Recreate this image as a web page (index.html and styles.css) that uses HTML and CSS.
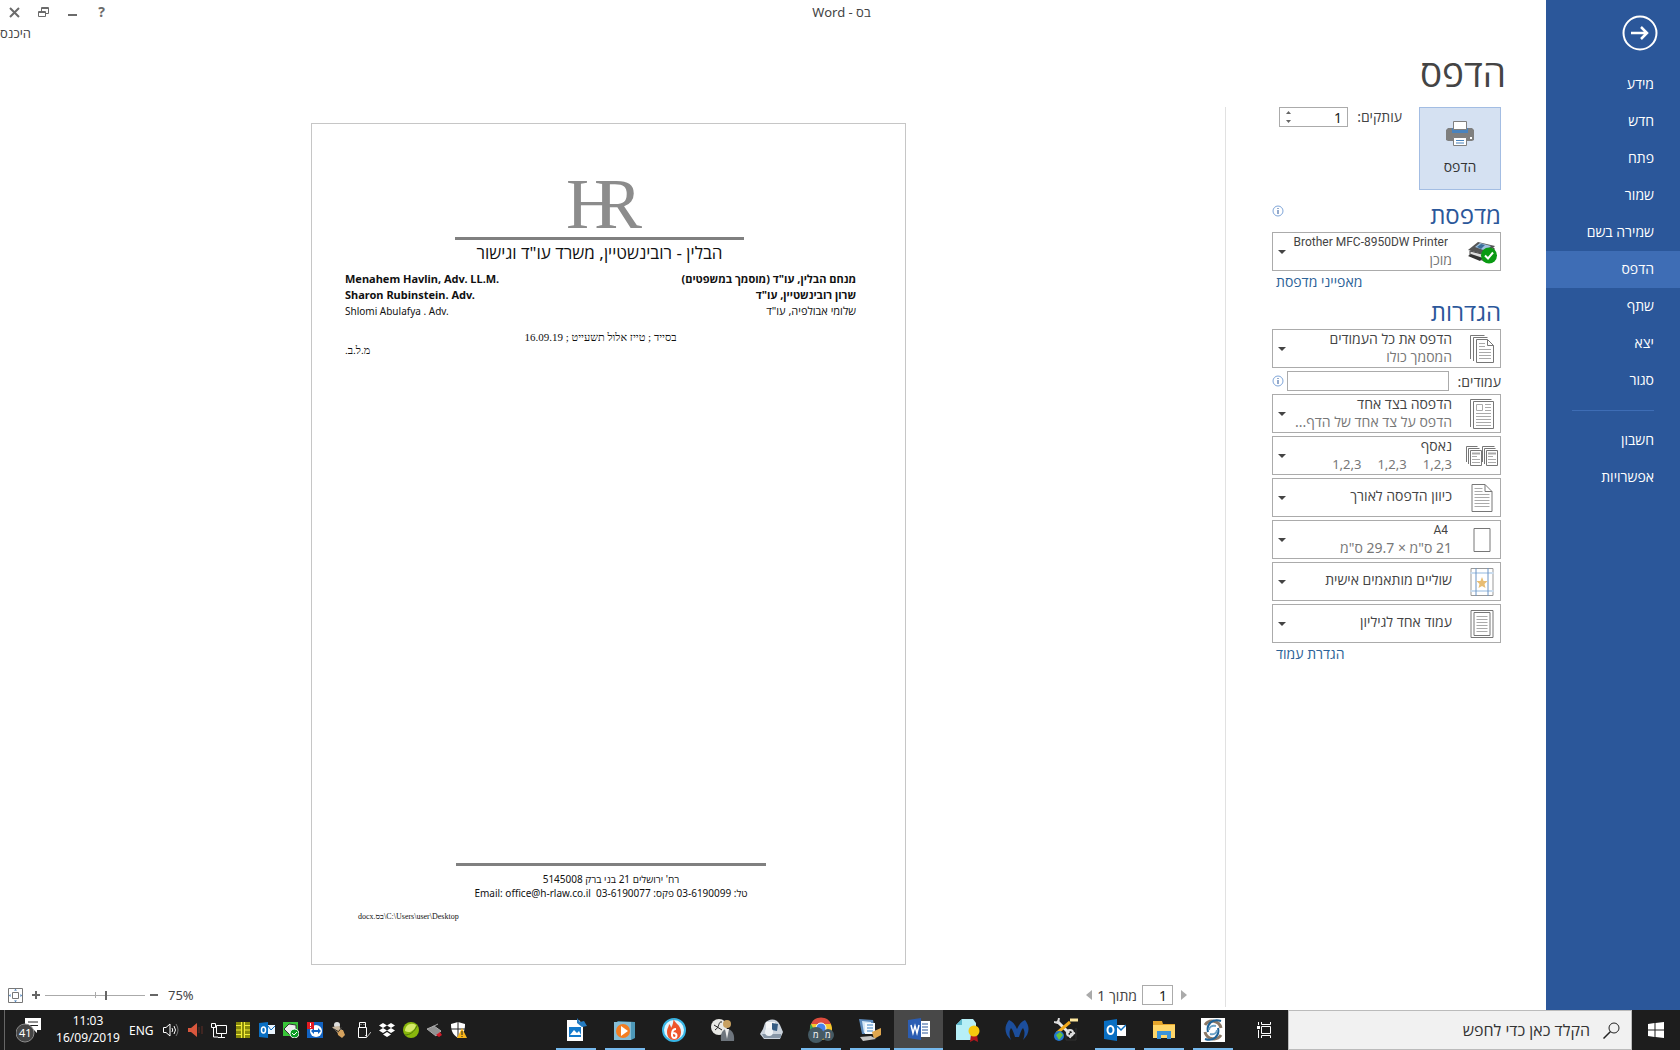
FILE: index.html
```html
<!DOCTYPE html>
<html lang="he" dir="rtl">
<head>
    <meta charset="UTF-8">
    <meta name="viewport" content="width=device-width, initial-scale=1.0">
    <title>בס - Word</title>
    <link rel="stylesheet" href="styles.css">
</head>
<body>
    <div class="app">
        <nav class="sidebar">
            <button class="back" aria-label="חזרה">
                <svg width="36" height="36" viewBox="0 0 36 36" fill="none" stroke="#fff" stroke-width="2"><circle cx="18" cy="18" r="16.5"/><path d="M9 18h16M19 12l6 6-6 6" stroke-width="2.500"/></svg>
            </button>
            <a href="#">מידע</a>
            <a href="#">חדש</a>
            <a href="#">פתח</a>
            <a href="#">שמור</a>
            <a href="#">שמירה בשם</a>
            <a href="#" class="active">הדפס</a>
            <a href="#">שתף</a>
            <a href="#">יצא</a>
            <a href="#">סגור</a>
            <hr>
            <a href="#">חשבון</a>
            <a href="#">אפשרויות</a>
        </nav>

        <main class="main">
            <header class="titlebar">
                <span class="window-title">בס - Word</span>
                <div class="window-buttons">
                    <button aria-label="סגור"><svg width="11" height="11" viewBox="0 0 11 11" stroke="#6b6b6b" stroke-width="2"><path d="M1 1l9 9M10 1l-9 9"/></svg></button>
                    <button aria-label="שחזר"><svg width="11" height="11" viewBox="0 0 11 11" fill="none" stroke="#6b6b6b"><path d="M.5 4.500h7v5h-7zM.5 5.500h7M3.500 4V.5h7v6H8M3.500 1.500h7"/></svg></button>
                    <button aria-label="מזער"><svg width="11" height="11" viewBox="0 0 11 11"><path d="M1 7h9v2H1z" fill="#6b6b6b"/></svg></button>
                    <button aria-label="עזרה">?</button>
                </div>
            </header>
            <a href="#" class="signin">היכנס</a>
            <h1>הדפס</h1>

            <div class="work">
                <section class="panel">
                    <div class="print-row">
                        <button class="print-button">
                            <svg width="28" height="26" viewBox="0 0 28 26"><path d="M2 7h24l2 2v10l-2 1H2l-2-1V9z" fill="#7f7f7f"/><path d="M6 7h16v5H6z" fill="#4a83bd"/><path d="M7.500.5h13v8h-13z" fill="#fff" stroke="#7f7f7f"/><path d="M7.500 16.500h13v8h-13z" fill="#fff" stroke="#7f7f7f"/><path d="M10 19.500h8M10 22h8" stroke="#4a83bd"/><path d="M24 16h2v2h-2z" fill="#fff"/></svg>
                            <span>הדפס</span>
                        </button>
                        <label for="copies">עותקים:</label>
                        <div class="spinner">
                            <input type="text" id="copies" value="1">
                            <div class="spin-buttons">
                                <button aria-label="יותר"><svg width="5" height="3"><path d="M0 3L2.500 0 5 3z" fill="#666"/></svg></button>
                                <button aria-label="פחות"><svg width="5" height="3"><path d="M0 0L2.500 3 5 0z" fill="#666"/></svg></button>
                            </div>
                        </div>
                    </div>

                    <div class="section-head">
                        <h2>מדפסת</h2>
                        <svg class="info" width="12" height="12" viewBox="0 0 12 12"><circle cx="6" cy="6" r="5" fill="none" stroke="#7fa6d9"/><path d="M5.500 3h1v1h-1zM5.500 5h1v4h-1z" fill="#2b579a"/></svg>
                    </div>
                    <div class="combo">
                        <svg class="combo-icon" width="30" height="24" viewBox="0 0 30 24"><path d="M1 10l10-8 17 4-9 9z" fill="#555"/><path d="M8 7l5-4 11 3-5 5z" fill="#9fc0dd"/><path d="M10 7l4-3 4 1-4 4z" fill="#3b6d99"/><path d="M3 11l16 4 8-7v6l-9 7-15-5z" fill="#ddd" stroke="#444"/><path d="M1 16l3-2 12 4-3 3z" fill="#333"/><circle cx="22" cy="15.500" r="8" fill="#0a9a13"/><path d="M18 15.500l3 3 5-6" fill="none" stroke="#fff" stroke-width="2"/></svg>
                        <div class="combo-text">
                            <select class="latin" aria-label="מדפסת"><option>Brother MFC-8950DW Printer</option></select>
                            <span>מוכן</span>
                        </div>
                        <i class="arrow"></i>
                    </div>
                    <a href="#" class="panel-link">מאפייני מדפסת</a>

                    <div class="section-head second">
                        <h2>הגדרות</h2>
                    </div>
                    <div class="combo">
                        <svg class="combo-icon" width="24" height="28" viewBox="0 0 24 28" fill="none" stroke="#777"><path d="M.5 24V.5h14M3.500 26V2.500h14M6.500 4.500h11l6 6v17h-17zM17.500 4.500v6h6"/><path d="M9 8.500h6M9 11.500h6M9 14.500h12M9 17.500h12M9 20.500h12M9 23.500h12" stroke="#aaa"/></svg>
                        <div class="combo-text">
                            <select aria-label="עמודים להדפסה"><option>הדפס את כל העמודים</option></select>
                            <span>המסמך כולו</span>
                        </div>
                        <i class="arrow"></i>
                    </div>
                    <div class="pages-row">
                        <label for="pages">עמודים:</label>
                        <input type="text" id="pages">
                        <svg class="info" width="12" height="12" viewBox="0 0 12 12"><circle cx="6" cy="6" r="5" fill="none" stroke="#7fa6d9"/><path d="M5.500 3h1v1h-1zM5.500 5h1v4h-1z" fill="#2b579a"/></svg>
                    </div>
                    <div class="combo">
                        <svg class="combo-icon" width="24" height="30" viewBox="0 0 24 30" fill="none" stroke="#777"><path d="M.5 28V.5h21M3.500 2.500h20v27h-20z"/><path d="M6.500 5.500h6v6h-6zM15 5.500h6M15 8.500h6M15 11.500h6M6 14.500h15M6 17.500h15M6 20.500h15M6 23.500h15M6 26.500h15" stroke="#aaa"/></svg>
                        <div class="combo-text">
                            <select aria-label="צדדים"><option>הדפסה בצד אחד</option></select>
                            <span>הדפס על צד אחד של הדף...</span>
                        </div>
                        <i class="arrow"></i>
                    </div>
                    <div class="combo">
                        <svg class="combo-icon" width="32" height="20" viewBox="0 0 32 20" fill="none" stroke="#777"><path d="M.5 16V.5h11M2.500 18V2.500h11M4.500 4.500h11v15h-11zM16.500 16V.5h12M18.500 18V2.500h11M20.500 4.500h11v15h-11z"/><path d="M6 7.500h8M22 7.500h8" stroke="#aaa" stroke-width="2"/><path d="M6 10.500h5M6 13.500h8M6 16.500h8M22 10.500h5M22 13.500h8M22 16.500h8" stroke="#aaa"/></svg>
                        <div class="combo-text">
                            <select aria-label="איסוף"><option>נאסף</option></select>
                            <span class="sets"><b>1,2,3</b><b>1,2,3</b><b>1,2,3</b></span>
                        </div>
                        <i class="arrow"></i>
                    </div>
                    <div class="combo">
                        <svg class="combo-icon" width="21" height="28" viewBox="0 0 21 28" fill="none" stroke="#777"><path d="M.5.5h13l7 7v20H.5zM13.500.5v7h7"/><path d="M3 4.500h8M3 7.500h8M3 10.500h15M3 13.500h15M3 16.500h15M3 19.500h15M3 22.500h15" stroke="#aaa"/></svg>
                        <div class="combo-text">
                            <select aria-label="כיוון"><option>כיוון הדפסה לאורך</option></select>
                        </div>
                        <i class="arrow"></i>
                    </div>
                    <div class="combo">
                        <svg class="combo-icon" width="17" height="24" viewBox="0 0 17 24"><path d="M.5.5h16v23H.5z" fill="none" stroke="#777"/></svg>
                        <div class="combo-text">
                            <select class="latin" aria-label="גודל נייר"><option>A4</option></select>
                            <span>21 ס"מ × 29.7 ס"מ</span>
                        </div>
                        <i class="arrow"></i>
                    </div>
                    <div class="combo">
                        <svg class="combo-icon" width="23" height="28" viewBox="0 0 23 28" fill="none"><path d="M.5.5h22v27H.5z" stroke="#999"/><path d="M0 5h23M0 23h23" stroke="#c9dcef" stroke-width="2"/><path d="M5.500 0v28M17.500 0v28" stroke="#6a93c4"/><path d="M11.500 9l1.500 4h4l-3 3 1 4-3.500-2L8 20l1-4-3-3h4z" fill="#e8bd74"/></svg>
                        <div class="combo-text">
                            <select aria-label="שוליים"><option>שוליים מותאמים אישית</option></select>
                        </div>
                        <i class="arrow"></i>
                    </div>
                    <div class="combo">
                        <svg class="combo-icon" width="23" height="28" viewBox="0 0 23 28" fill="none" stroke="#777"><path d="M.5.5h22v27H.5zM3.500 2.500h16v23h-16z"/><path d="M6 6.500h11M6 9.500h11M6 12.500h11M6 15.500h11M6 18.500h11M6 21.500h11" stroke="#aaa"/></svg>
                        <div class="combo-text">
                            <select aria-label="עמודים לגיליון"><option>עמוד אחד לגיליון</option></select>
                        </div>
                        <i class="arrow"></i>
                    </div>
                    <a href="#" class="panel-link">הגדרת עמוד</a>
                </section>

                <section class="preview">
                    <div class="paper-area">
                        <article class="paper">
                            <div class="letterhead">
                                <svg class="logo" width="84" height="52" viewBox="0 0 84 52"><text x="8" y="48">H</text><text x="36" y="48">R</text></svg>
                                <div class="rule"></div>
                                <h3>הבלין - רובינשטיין, משרד עו"ד וגישור</h3>
                            </div>
                            <div class="lawyers">
                                <ul>
                                    <li><b>מנחם הבלין, עו"ד (מוסמך במשפטים)</b></li>
                                    <li><b>שרון רובינשטיין, עו"ד</b></li>
                                    <li>שלומי אבולפיה, עו"ד</li>
                                </ul>
                                <ul class="latin-names" dir="ltr">
                                    <li><b>Menahem Havlin, Adv. LL.M.</b></li>
                                    <li><b>Sharon Rubinstein. Adv.</b></li>
                                    <li>Shlomi Abulafya . Adv.</li>
                                </ul>
                            </div>
                            <p class="date">בסייד ; טייז אלול תשעייט ; 16.09.19</p>
                            <p class="initials">מ.ל.ב.</p>
                            <footer class="paper-footer">
                                <div class="rule"></div>
                                <p>רח' ירושלים 21 בני ברק 5145008</p>
                                <p>טל: 03-6190099 פקס: 03-6190077&nbsp; <bdi>Email: office@h-rlaw.co.il</bdi></p>
                            </footer>
                            <p class="path">C:\Users\user\Desktop\בס.docx</p>
                        </article>
                    </div>
                    <div class="statusbar">
                        <div class="page-nav">
                            <button aria-label="הקודם"><svg width="6" height="10"><path d="M0 0l6 5-6 5z" fill="#aaa"/></svg></button>
                            <input type="text" value="1" aria-label="עמוד">
                            <span>מתוך 1</span>
                            <button aria-label="הבא"><svg width="6" height="10"><path d="M6 0L0 5l6 5z" fill="#aaa"/></svg></button>
                        </div>
                        <div class="zoom">
                            <span class="percent" dir="ltr">75%</span>
                            <button aria-label="הקטן"><svg width="8" height="8"><path d="M0 3h8v2H0z" fill="#666"/></svg></button>
                            <input type="range" min="0" max="100" value="39" aria-label="זום">
                            <button aria-label="הגדל"><svg width="8" height="8"><path d="M0 3h8v2H0zM3 0h2v8H3z" fill="#666"/></svg></button>
                            <button class="fit" aria-label="התאם לעמוד"><svg width="15" height="15" viewBox="0 0 15 15" fill="none" stroke="#777"><path d="M.5.5h14v14H.5zM4.500 4.500h6v6h-6z"/><path d="M6 2.500L7.500 1 9 2.500zM6 12.500L7.500 14 9 12.500zM2.500 6L1 7.500 2.500 9zM12.500 6L14 7.500 12.500 9z" fill="#2b6cb0" stroke="none"/></svg></button>
                        </div>
                    </div>
                </section>
            </div>
        </main>
    </div>

    <div class="taskbar">
        <button class="start" aria-label="התחל"><svg width="16" height="16" viewBox="0 0 16 16" fill="#fff"><path d="M0 2l6.500-1v6.500H0zM7.500 1L16 0v7.500H7.500zM0 8.500h6.500V15L0 14zM7.500 8.500H16V16l-8.500-1z"/></svg></button>
        <label class="search">
            <svg width="17" height="17" viewBox="0 0 17 17" fill="none" stroke="#222"><circle cx="11" cy="6" r="5"/><path d="M7.500 9.500L.5 16.500" stroke-width="1.500"/></svg>
            <input type="text" placeholder="הקלד כאן כדי לחפש">
        </label>
        <button class="task view" aria-label="תצוגת משימות"><svg width="16" height="16" viewBox="0 0 16 16" fill="none" stroke="#fff"><path d="M4.500 4.500h9v7h-9zM4.500 0v2.500h9V0M4.500 16v-2.500h9V16M1.500 0v3M1.500 8v8"/><path d="M0 4h3v3H0z" fill="#fff" stroke="none"/></svg></button>
        <button class="task open" aria-label="סריקה"><svg width="24" height="24" viewBox="0 0 24 24" fill="none"><path d="M0 0h24v24H0z" fill="#fff"/><path d="M4 7c4-6 14-5 16 3" stroke="#8b7967" stroke-width="3"/><path d="M20 17c-4 6-14 5-16-3" stroke="#8b7967" stroke-width="3"/><path d="M20 3C12 0 5 6 7 14" stroke="#1e6398" stroke-width="2"/><path d="M4 21c8 3 15-3 13-11" stroke="#1e6398" stroke-width="2"/><path d="M8 12c0-3 3-5 7-4M16 12c0 3-3 5-7 4" stroke="#6ca2c6" stroke-width="2"/></svg></button>
        <button class="task open" aria-label="סייר הקבצים"><svg width="22" height="18" viewBox="0 0 22 18"><path d="M0 0h9l1 3h12v14H0z" fill="#e5a52b"/><path d="M0 4h22v13H0z" fill="#ffd669"/><path d="M4 18v-8h14v8h-4v-4H8v4z" fill="#3b93d9"/></svg></button>
        <button class="task open" aria-label="Outlook"><svg width="22" height="22" viewBox="0 0 22 22"><path d="M0 2l13-2v22L0 20z" fill="#0a6fc2"/><path d="M13 6h9v11h-9z" fill="#fff"/><path d="M13 7l4 4 5-5" fill="none" stroke="#0a6fc2" stroke-width="1.500"/><ellipse cx="6.500" cy="11" rx="3" ry="4" fill="none" stroke="#fff" stroke-width="2"/></svg></button>
        <button class="task" aria-label="כלים"><svg width="24" height="24" viewBox="0 0 24 24" fill="none"><path d="M12 12v10h10V10" stroke="#333"/><path d="M3 3l12 12" stroke="#e9e9e9" stroke-width="3"/><path d="M0 4l4 1 1-5M21 15l-4 1-1 4" stroke="#ddd" stroke-width="2"/><circle cx="16" cy="15" r="3" stroke="#ddd" stroke-width="2"/><path d="M16 4L3 15" stroke="#f2a91c" stroke-width="3"/><path d="M16 2h8" stroke="#ffe9a0" stroke-width="3"/><circle cx="5" cy="18" r="5" fill="#2277d2"/><path d="M2 17l4-3 3 3-4 5z" fill="#67c33e"/></svg></button>
        <button class="task" aria-label="Malwarebytes"><svg width="24" height="22" viewBox="0 0 24 22"><path d="M4 1c3 1 6 4 8 9 2-5 5-8 8-9 5 6 5 14-2 20 2-5 2-9 0-12-2 2-3 6-4 9h-4C9 15 8 11 6 9c-2 3-2 7 0 12C-1 15-1 7 4 1z" fill="#1c4e9c"/></svg></button>
        <button class="task" aria-label="תעודה"><svg width="24" height="24" viewBox="0 0 24 24"><path d="M6 1h11l3 4v17H0V7z" fill="#b7eff7"/><path d="M0 7l6-6v6z" fill="#5eb9cd"/><path d="M15 16l-1 8 4-2 4 2-1-8z" fill="#b2171d"/><circle cx="18" cy="13" r="5.500" fill="#f7c90e"/></svg></button>
        <button class="task current" aria-label="Word"><svg width="22" height="22" viewBox="0 0 22 22"><path d="M12 3h10v16H12z" fill="#fff"/><path d="M14 6h6M14 9h6M14 12h6M14 15h6" stroke="#2b579a"/><path d="M0 2l13-2v22L0 20z" fill="#2b5db3"/><path d="M3 7l2 8 2-7 2 7 2-8" fill="none" stroke="#fff" stroke-width="1.500"/></svg></button>
        <button class="task open" aria-label="מסמכים"><svg width="24" height="24" viewBox="0 0 24 24"><path d="M1 1l14 1 3 14H4z" fill="#5b89bb"/><path d="M4 3l9 1 2 10-9 1z" fill="#d4e7f7"/><path d="M7 5h10v11H7z" fill="#f5faff"/><path d="M9 7h6M9 10h6M9 13h6" stroke="#3b81c4"/><path d="M14 14l9-4v7l-7 4z" fill="#dfa64e"/><path d="M2 19l11-1 5 3-13 2z" fill="#c5c5c5"/></svg></button>
        <button class="task open" aria-label="Chrome"><svg width="26" height="26" viewBox="0 0 26 26"><circle cx="13" cy="12" r="11" fill="#f7c62d"/><path d="M3 7a11 11 0 0 1 20 0z" fill="#dd4b3e"/><path d="M3 7l8 15C3 21 0 13 3 7z" fill="#36a455"/><circle cx="13" cy="11" r="5" fill="#4684ed" stroke="#fff"/><circle cx="8" cy="18" r="8" fill="#455a64"/><circle cx="20" cy="18" r="6" fill="#455a64"/><text class="badge-text" x="5" y="21">מ</text><text class="badge-text" x="17" y="21">מ</text></svg></button>
        <button class="task" aria-label="רובוט"><svg width="24" height="22" viewBox="0 0 24 22"><path d="M5 4c4-5 12-5 15 2l3 7-3 7H4l-4-5 3-5z" fill="#cbd3dc"/><path d="M6 3h9v7H6z" fill="#f5f6f7"/><path d="M12 4l6 1-1 7-5-1z" fill="#345b82"/><path d="M2 15h19v4H4z" fill="#8796a6"/><circle cx="9" cy="13" r="4" fill="#edf1f4"/></svg></button>
        <button class="task" aria-label="חתימה"><svg width="24" height="24" viewBox="0 0 24 24"><circle cx="8" cy="9" r="8" fill="#e9e9e5"/><path d="M4 12c5-3 3-9 7-8M3 7l8 5" stroke="#222" fill="none"/><circle cx="16" cy="6" r="4" fill="#c7a060"/><path d="M10 23c-1-8 2-12 6-12s8 4 7 12z" fill="#6e757d"/><path d="M14 11l2 10 2-10z" fill="#eee"/></svg></button>
        <button class="task" aria-label="צריבה"><svg width="24" height="24" viewBox="0 0 24 24"><circle cx="12" cy="12" r="11" fill="#dff5ff" stroke="#37b6e6" stroke-width="2"/><path d="M12 0c-1 5 7 6 7 14 0 5-3 8-7 8s-7-3-7-8c0-4 2-5 2-8 2 2 2 3 2 4 2-3 2-6 3-10z" fill="#ee552b"/><path d="M14 11c-5 0-5 9-2 9s4-5-1-5" fill="none" stroke="#fff" stroke-width="2"/></svg></button>
        <button class="task open" aria-label="נגן מדיה"><svg width="22" height="20" viewBox="0 0 22 20"><path d="M3 1l18 1v16l-4 2z" fill="#4d98b8"/><path d="M0 2h17v18H0z" fill="#86bdd5"/><circle cx="9" cy="11" r="7" fill="#f37d21"/><path d="M7 6l7 5-7 5z" fill="#fff"/></svg></button>
        <button class="task open" aria-label="תמונות"><svg width="22" height="24" viewBox="0 0 22 24"><path d="M2 2h12l4 5v16H2z" fill="#fff"/><path d="M4 9h12v10H4z" fill="#147acb"/><path d="M5 17l4-5 3 3 2-2 2 4z" fill="#fff"/><path d="M12 0l3 4 4-1 3 5-5 1-5-4z" fill="#247bc1"/></svg></button>

        <div class="tray">
            <svg width="16" height="16" viewBox="0 0 16 16"><path d="M7 0l7 2c0 6-1 10-7 14C1 12 0 8 0 2z" fill="#fff"/><path d="M7 0v15M0 7h14" stroke="#222"/><path d="M11 6l5 10H6z" fill="#f8b51b"/><path d="M11 9v4M11 14v1" stroke="#222"/></svg>
            <svg width="16" height="16" viewBox="0 0 16 16"><path d="M5 5l6-3M0 7l7-3 7 5-5 5z" fill="#929292" stroke="#aaa"/><path d="M9 13l4-3 2 3-3 2z" fill="#cf1b29"/></svg>
            <svg width="16" height="16" viewBox="0 0 16 16"><circle cx="8" cy="8" r="8" fill="#89b70c"/><path d="M2 9C2 3 8 0 13 3 12 8 7 12 2 9z" fill="#d4e96a"/><path d="M2 13c5 0 9-3 12-9" stroke="#4d7708" fill="none"/></svg>
            <svg width="16" height="16" viewBox="0 0 16 16" fill="#fff"><path d="M4 1l4 2.500L4 6 0 3.500zM12 1l4 2.500L12 6 8 3.500zM4 6l4 2.500L4 11 0 8.500zM12 6l4 2.500-4 2.500-4-2.500zM8 10l4 2.500L8 15l-4-2.500z"/></svg>
            <svg width="16" height="16" viewBox="0 0 16 16" fill="none" stroke="#fff"><path d="M4.500 5V.5h6V5M3.500 5.500h8v10h-8z"/><path d="M6 2v1M9 2v1M10 13l2 2 4-5" stroke="#bbb"/></svg>
            <svg width="16" height="16" viewBox="0 0 16 16"><circle cx="6" cy="3" r="3" fill="#ddd"/><path d="M1 5l7-1 5 7-3 3z" fill="#c9b69c"/><path d="M6 8l6 0 2 5-3 3-4-3z" fill="#d5a25e"/><path d="M3 7l5 3M11 5l-3 4" stroke="#333"/></svg>
            <svg width="16" height="16" viewBox="0 0 16 16"><path d="M0 0h16v16H0z" fill="#1263c2"/><circle cx="9" cy="9" r="6" fill="#fff"/><path d="M4 9l3-3v2h4V6l3 3-3 3v-2H7v2z" fill="#1263c2"/><path d="M0 0h7v7H0z" fill="#e31b23"/><path d="M3.500 1v3M3.500 5v1" stroke="#fff"/></svg>
            <svg width="16" height="16" viewBox="0 0 16 16"><path d="M0 0h15v14H0z" fill="#38c438"/><path d="M1 7l5-5 7 1v5l-6 5z" fill="#eee" stroke="#333"/><circle cx="11.500" cy="11.500" r="4.500" fill="#0b9c25" stroke="#fff"/><path d="M9 11l2 2 3-3" stroke="#fff" fill="none"/></svg>
            <svg width="16" height="16" viewBox="0 0 16 16"><path d="M0 1l9-1v16l-9-1z" fill="#0a6fc2"/><path d="M9 3h7v9H9z" fill="#eaf4fd"/><path d="M9 4l3 4 4-4" fill="none" stroke="#0a6fc2"/><ellipse cx="4.500" cy="8" rx="2" ry="3" fill="none" stroke="#fff" stroke-width="1.500"/></svg>
            <svg width="16" height="16" viewBox="0 0 16 16"><path d="M1 0h14v16H1z" fill="#8a8b0b"/><path d="M1 3.500h5M1 8h5M1 12.500h5M10 3.500h5M10 8h5M10 12.500h5M6.500 0v16M9.500 0v16" stroke="#f3ed38"/></svg>
            <svg width="16" height="16" viewBox="0 0 16 16" fill="none" stroke="#fff"><path d="M5.500 3.500h10v8h-10zM10.500 12v3M7 15.500h7M.5 1.500h4v4h-4zM2.500 6v9H7"/></svg>
            <svg width="16" height="16" viewBox="0 0 16 16"><path d="M1 6h3l6-5v14l-6-5H1z" fill="#d9573d"/><path d="M12 5v6M15 4v8" stroke="#642f27"/></svg>
            <svg width="16" height="16" viewBox="0 0 16 16" fill="none" stroke="#fff"><path d="M.5 5.500H3l4-3.500v12L3 10.500H.5zM9 6q1.500 2 0 4M11 4q3 4 0 8"/><path d="M13 2q4 6 0 12" stroke="#777"/></svg>
        </div>
        <span class="lang">ENG</span>
        <time class="clock"><span>11:03</span><span dir="ltr">16/09/2019</span></time>
        <button class="notifications" aria-label="התראות">
            <svg width="26" height="26" viewBox="0 0 26 26"><path d="M9 1h16v12h-4v3l-3-3H9z" fill="#fff"/><path d="M12 5h10M12 8.500h10" stroke="#222"/><circle cx="9" cy="16" r="9" fill="#454545" stroke="#8c8c8c"/><text class="badge-text count" x="3" y="20">41</text></svg>
        </button>
        <div class="peek"></div>
    </div>
</body>
</html>
```
FILE: styles.css
```css
* {
    box-sizing: border-box;
}

body {
    margin: 0;
    height: 100vh;
    display: flex;
    flex-direction: column;
    overflow: hidden;
    font-family: "Noto Sans", "Open Sans", "DejaVu Sans", sans-serif;
    font-size: 13px;
    color: #444;
    background-color: #fff;
}

button {
    padding: 0;
    border: none;
    background: none;
    font: inherit;
    color: inherit;
}

input,
select {
    font: inherit;
    color: inherit;
}

a {
    text-decoration: none;
}

h1,
h2,
h3,
p,
ul {
    margin: 0;
    padding: 0;
    font-weight: normal;
}

svg {
    display: block;
    flex: none;
}

.app {
    flex: 1;
    min-height: 0;
    display: flex;
}

/* Blue menu */
.sidebar {
    width: 134px;
    background-color: #2b579a;
    display: flex;
    flex-direction: column;
}

.sidebar .back {
    align-self: flex-start;
    margin: 15px 22px;
}

.sidebar a {
    height: 37px;
    line-height: 36px;
    padding: 0 26px;
    color: #fff;
    font-size: 14px;
}

.sidebar a.active {
    background-color: #3e6db5;
}

.sidebar hr {
    width: 82px;
    margin: 11px 26px;
    border: none;
    border-top: 1px solid #3e6db5;
}

/* Title bar */
.main {
    flex: 1;
    min-width: 0;
    display: flex;
    flex-direction: column;
}

.titlebar {
    height: 24px;
    display: flex;
    align-items: center;
}

.window-title {
    margin: 0 auto;
    padding-left: 30px;
}

.window-buttons {
    display: flex;
    flex-direction: row-reverse;
    gap: 18px;
    padding-left: 9px;
}

.window-buttons button {
    width: 11px;
    font-weight: bold;
    font-size: 14px;
    line-height: 14px;
    color: #6b6b6b;
}

.signin {
    align-self: flex-end;
    line-height: 18px;
    color: #444;
}

h1 {
    padding: 0 40px;
    height: 65px;
    line-height: 62px;
    font-size: 37px;
}

.work {
    flex: 1;
    min-height: 0;
    display: flex;
}

/* Print settings */
.panel {
    width: 321px;
    margin-bottom: 3px;
    padding: 0 45px 0 46px;
    border-left: 1px solid #e1e1e1;
    font-size: 14px;
}

.print-row {
    display: flex;
    align-items: flex-start;
}

.print-button {
    width: 82px;
    height: 83px;
    margin-left: 17px;
    display: flex;
    flex-direction: column;
    align-items: center;
    justify-content: center;
    gap: 10px;
    border: 1px solid #a3bde3;
    background-color: #d5e1f2;
    color: #333;
}

.print-row label {
    line-height: 20px;
    margin-left: 9px;
}

.spinner {
    width: 69px;
    height: 20px;
    display: flex;
    border: 1px solid #ababab;
}

.spinner input {
    flex: 1;
    min-width: 0;
    border: none;
    padding: 0 5px;
    color: #222;
}

.spin-buttons {
    width: 16px;
    display: flex;
    flex-direction: column;
    justify-content: space-around;
    align-items: center;
}

.section-head {
    display: flex;
    justify-content: space-between;
    margin-top: 8px;
    height: 34px;
}

.section-head.second {
    margin-top: 5px;
}

.section-head .info {
    margin-top: 7px;
}

h2 {
    font-size: 24px;
    line-height: 34px;
    color: #2b579a;
}

.combo {
    height: 39px;
    margin-bottom: 3px;
    display: flex;
    align-items: center;
    border: 1px solid #ababab;
}

.combo-icon {
    width: 36px;
    margin-left: 12px;
}

.combo-text {
    flex: 1;
    min-width: 0;
    padding-bottom: 1px;
    display: flex;
    flex-direction: column;
}

.combo-text select {
    appearance: none;
    border: none;
    background: none;
    padding: 0;
    height: 18px;
    line-height: 18px;
}

.combo-text select:only-child {
    margin-bottom: 3px;
}

.combo-text select.latin {
    padding-right: 4px;
    font-family: Roboto, sans-serif;
    font-size: 12px;
}

.combo-text span {
    line-height: 18px;
    white-space: nowrap;
    color: #777;
}

.combo-text .sets {
    display: flex;
    gap: 16px;
    font-size: 13px;
}

.sets b {
    font-weight: normal;
}

.arrow {
    margin: 0 5px;
    border: 4px solid transparent;
    border-top-color: #444;
    border-bottom: none;
}

.panel-link {
    display: block;
    padding-left: 4px;
    line-height: 16px;
    text-align: left;
    color: #2b6297;
}

.pages-row {
    height: 20px;
    margin-bottom: 3px;
    display: flex;
    align-items: center;
    justify-content: space-between;
}

.pages-row input {
    width: 162px;
    height: 20px;
    margin-right: auto;
    margin-left: 3px;
    border: 1px solid #ababab;
}

/* Preview */
.preview {
    flex: 1;
    min-width: 0;
    display: flex;
    flex-direction: column;
}

.paper-area {
    flex: 1;
    min-height: 0;
    padding: 16px 8px 0 0;
    display: flex;
    justify-content: center;
    align-items: flex-start;
}

.paper {
    width: 595px;
    aspect-ratio: 595 / 842;
    padding: 56px 33px 42px;
    display: flex;
    flex-direction: column;
    border: 1px solid #c6c6c6;
    font-size: 11px;
    color: #111;
}

.letterhead {
    width: 289px;
    margin-right: 128px;
    display: flex;
    flex-direction: column;
    align-items: center;
}

.logo {
    direction: ltr;
    font-family: "Liberation Serif", serif;
    font-size: 72px;
    fill: #8c8c8c;
    overflow: visible;
}

.rule {
    width: 100%;
    height: 3px;
    margin: 5px 0 3px;
    background-color: #808080;
}

h3 {
    font-size: 17px;
    line-height: 20px;
}

.lawyers {
    margin-top: 8px;
    padding: 0 16px 0 0;
    display: flex;
    justify-content: space-between;
}

.lawyers ul {
    list-style: none;
    line-height: 16px;
}

.latin-names li {
    font-size: 10px;
}

.lawyers b {
    font-size: 11px;
}

.date {
    margin-top: 11px;
    padding-right: 16px;
    text-align: center;
    line-height: 14px;
    font-family: "Liberation Serif", serif;
}

.initials {
    line-height: 12px;
    text-align: left;
    font-family: "Liberation Serif", serif;
}

.paper-footer {
    width: 310px;
    margin-top: auto;
    margin-right: 106px;
    text-align: center;
    line-height: 14px;
    font-size: 10px;
    white-space: nowrap;
}

.paper-footer .rule {
    margin-bottom: 6px;
}

.path {
    margin-top: 12px;
    padding-left: 13px;
    text-align: left;
    line-height: 10px;
    font-family: "Liberation Serif", serif;
    font-size: 8px;
}

.statusbar {
    height: 30px;
    padding: 0 38px 0 8px;
    display: flex;
    justify-content: space-between;
    align-items: center;
}

.page-nav,
.zoom {
    display: flex;
    align-items: center;
}

.page-nav {
    gap: 5px;
    font-size: 14px;
}

.page-nav input {
    width: 31px;
    height: 20px;
    margin-right: 3px;
    border: 1px solid #ababab;
    padding: 0 5px;
    color: #222;
}

.zoom {
    gap: 5px;
}

.zoom .percent {
    margin-left: 5px;
}

.zoom .fit {
    margin-right: 4px;
}

.zoom input {
    appearance: none;
    width: 100px;
    height: 12px;
    margin: 0;
    background: linear-gradient(#aaa, #aaa) center / 1px 6px no-repeat,
                linear-gradient(#aaa, #aaa) center / 100% 1px no-repeat;
}

.zoom input::-webkit-slider-thumb {
    appearance: none;
    width: 2px;
    height: 9px;
    background-color: #666;
}

/* Taskbar */
.taskbar {
    height: 40px;
    display: flex;
    align-items: center;
    background-color: #1d1d1d;
    color: #fff;
    font-size: 12px;
}

.start {
    width: 48px;
    height: 40px;
    display: flex;
    align-items: center;
    justify-content: center;
}

.search {
    width: 344px;
    height: 40px;
    padding: 0 11px;
    display: flex;
    align-items: center;
    gap: 11px;
    border: 1px solid #bbb;
    background-color: #f1f1f1;
}

.search input {
    flex: 1;
    min-width: 0;
    border: none;
    background: none;
    font-size: 16px;
}

.search input::placeholder {
    color: #333;
}

.task {
    width: 49px;
    height: 40px;
    padding: 0 4px;
    display: flex;
    align-items: center;
    justify-content: center;
}

.task.view {
    width: 51px;
    padding: 0 0 0 4px;
}

.task.open {
    background: linear-gradient(#76b9ed, #76b9ed) bottom / 40px 2px no-repeat;
}

.task.current {
    background-color: #484848;
    border-bottom: 2px solid #76b9ed;
}

.badge-text {
    direction: ltr;
    font-size: 9px;
    fill: #fff;
}

.badge-text.count {
    font-size: 11px;
}

.tray {
    margin-right: auto;
    display: flex;
    gap: 8px;
}

.lang {
    margin-right: 9px;
}

.clock {
    width: 82px;
    padding-bottom: 2px;
    margin-left: 5px;
    display: flex;
    flex-direction: column;
    align-items: center;
    line-height: 17px;
}

.notifications {
    margin-left: 11px;
}

.peek {
    width: 5px;
    height: 40px;
    border-right: 1px solid #666;
}
```
